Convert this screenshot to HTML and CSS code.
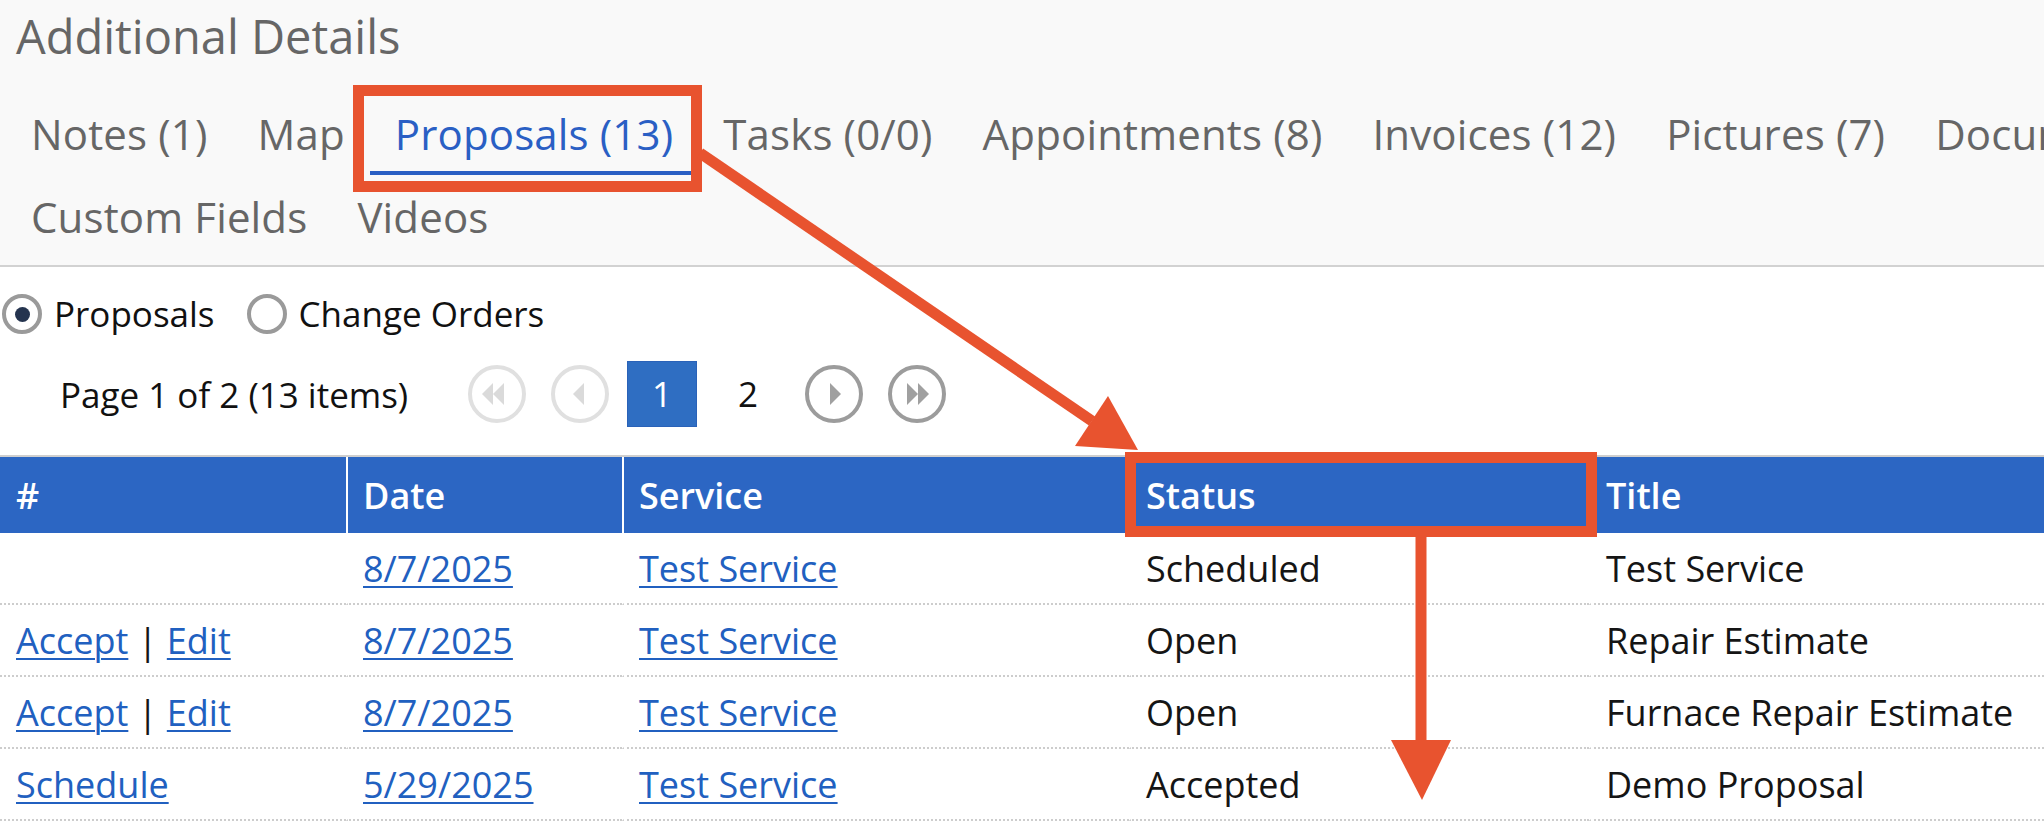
FILE: index.html
```html
<!DOCTYPE html>
<html lang="en">
<head>
    <meta charset="UTF-8">
    <title>Additional Details</title>
    <link rel="stylesheet" href="styles.css">
</head>
<body>
    <div class="page">
        <div class="details-head">
            <h2 class="details-title">Additional Details</h2>
            <ul class="tabs">
                <li class="tab">Notes (1)</li>
                <li class="tab">Map</li>
                <li class="tab tab-active">Proposals (13)</li>
                <li class="tab">Tasks (0/0)</li>
                <li class="tab">Appointments (8)</li>
                <li class="tab">Invoices (12)</li>
                <li class="tab">Pictures (7)</li>
                <li class="tab">Documents</li>
                <li class="tab">Custom Fields</li>
                <li class="tab">Videos</li>
            </ul>
        </div>

        <div class="doc-type">
            <label class="radio">
                <span class="radio-ring"><span class="radio-dot"></span></span>
                Proposals
            </label>
            <label class="radio">
                <span class="radio-ring"></span>
                Change Orders
            </label>
        </div>

        <div class="pager">
            <span class="pager-info">Page 1 of 2 (13 items)</span>
            <svg class="pager-btn pager-off" viewBox="0 0 58 58">
                <circle cx="29" cy="29" r="27" />
                <polygon points="14,29 25,18 25,40" />
                <polygon points="25,29 36,18 36,40" />
            </svg>
            <svg class="pager-btn pager-off pager-prev" viewBox="0 0 58 58">
                <circle cx="29" cy="29" r="27" />
                <polygon points="22,29 33,18 33,40" />
            </svg>
            <span class="page-num page-current">1</span>
            <span class="page-num">2</span>
            <svg class="pager-btn pager-next" viewBox="0 0 58 58">
                <circle cx="29" cy="29" r="27" />
                <polygon points="25,18 25,40 36,29" />
            </svg>
            <svg class="pager-btn pager-last" viewBox="0 0 58 58">
                <circle cx="29" cy="29" r="27" />
                <polygon points="19,18 19,40 30,29" />
                <polygon points="30,18 30,40 41,29" />
            </svg>
        </div>

        <table class="proposals-table">
            <colgroup>
                <col class="col-num">
                <col class="col-date">
                <col class="col-service">
                <col class="col-status">
                <col class="col-title">
            </colgroup>
            <thead>
                <tr>
                    <th>#</th>
                    <th>Date</th>
                    <th>Service</th>
                    <th>Status</th>
                    <th>Title</th>
                </tr>
            </thead>
            <tbody>
                <tr>
                    <td></td>
                    <td><a href="#">8/7/2025</a></td>
                    <td><a href="#">Test Service</a></td>
                    <td>Scheduled</td>
                    <td>Test Service</td>
                </tr>
                <tr>
                    <td><a href="#">Accept</a> | <a href="#">Edit</a></td>
                    <td><a href="#">8/7/2025</a></td>
                    <td><a href="#">Test Service</a></td>
                    <td>Open</td>
                    <td>Repair Estimate</td>
                </tr>
                <tr>
                    <td><a href="#">Accept</a> | <a href="#">Edit</a></td>
                    <td><a href="#">8/7/2025</a></td>
                    <td><a href="#">Test Service</a></td>
                    <td>Open</td>
                    <td>Furnace Repair Estimate</td>
                </tr>
                <tr>
                    <td><a href="#">Schedule</a></td>
                    <td><a href="#">5/29/2025</a></td>
                    <td><a href="#">Test Service</a></td>
                    <td>Accepted</td>
                    <td>Demo Proposal</td>
                </tr>
            </tbody>
        </table>

        <!-- annotation marks drawn over the screenshot -->
        <svg class="marks" viewBox="0 0 2044 822">
            <rect x="358.5" y="90.5" width="338" height="96" />
            <line x1="700" y1="153" x2="1092" y2="421" />
            <polygon points="1138,450 1108,396 1075,446" />
            <rect x="1130.5" y="457.5" width="461" height="74" />
            <line x1="1421" y1="536" x2="1421" y2="742" />
            <polygon points="1391,740 1451,740 1422,800" />
        </svg>
    </div>
</body>
</html>
```

FILE: styles.css
```css
body {
    margin: 0;
    font-family: "Open Sans", "Liberation Sans", sans-serif;
    background-color: #fff;
    color: #111;
    overflow: hidden;
}

.page {
    position: relative;
    width: 2044px;
    height: 822px;
    overflow: hidden;
}

/* header + tabs */
.details-head {
    background-color: #f9f9f9;
    border-bottom: 2px solid #d2d2d2;
    padding-bottom: 7px;
}

.details-title {
    margin: 0;
    padding-left: 16px;
    font-size: 47px;
    font-weight: normal;
    line-height: 72px;
    color: #666;
}

.tabs {
    display: flex;
    flex-wrap: wrap;
    row-gap: 14px;
    width: 2400px;
    margin: 0;
    padding: 34px 0 0 6px;
    list-style: none;
}

.tab {
    padding: 0 25px 9px;
    font-size: 42px;
    letter-spacing: 0.15px;
    line-height: 56px;
    color: #666;
    border-bottom: 4px solid transparent;
    white-space: nowrap;
}

.tab-active {
    color: #2a5fc4;
    border-bottom-color: #2a5fc4;
}

/* proposals / change orders */
.doc-type {
    display: flex;
    align-items: center;
    gap: 32px;
    padding: 27px 0 0 2px;
    font-size: 35px;
    line-height: 40px;
}

.radio {
    display: flex;
    align-items: center;
    gap: 12px;
}

.radio-ring {
    width: 32px;
    height: 32px;
    border: 4px solid #9a9a9a;
    border-radius: 50%;
    display: flex;
    justify-content: center;
    align-items: center;
}

.radio-dot {
    width: 15px;
    height: 15px;
    border-radius: 50%;
    background-color: #25344f;
}

/* pager */
.pager {
    display: flex;
    align-items: center;
    height: 66px;
    margin-top: 27px;
    padding-left: 60px;
    font-size: 35px;
}

.pager-info {
    width: 408px;
    white-space: nowrap;
}

.pager-btn {
    width: 58px;
    height: 58px;
}

.pager-btn circle {
    fill: none;
    stroke: #9c9c9c;
    stroke-width: 4;
}

.pager-btn polygon {
    fill: #a0a0a0;
}

.pager-off circle {
    stroke: #e0e0e0;
}

.pager-off polygon {
    fill: #dadada;
}

.pager-prev {
    margin-left: 25px;
}

.page-num {
    width: 70px;
    height: 66px;
    line-height: 66px;
    text-align: center;
    color: #111;
}

.page-current {
    margin-left: 18px;
    background-color: #2f6ec2;
    box-shadow: inset 0 0 0 1px #2a62b8;
    color: #fff;
}

.page-current + .page-num {
    margin-left: 16px;
}

.pager-next {
    margin-left: 22px;
}

.pager-last {
    margin-left: 25px;
}

/* table */
.proposals-table {
    width: 2300px;
    margin-top: 28px;
    border-top: 2px solid #cfcfcf;
    border-spacing: 0;
    table-layout: fixed;
    font-size: 36px;
}

.col-num { width: 346px; }
.col-date { width: 276px; }
.col-service { width: 507px; }
.col-status { width: 460px; }
.col-title { width: 711px; }

.proposals-table th {
    height: 76px;
    padding: 0 15px;
    background-color: #2c66c3;
    color: #fff;
    font-weight: 600;
    text-align: left;
    white-space: nowrap;
}

.proposals-table th + th {
    border-left: 2px solid #fff;
}

.proposals-table td {
    height: 70px;
    padding: 0 15px;
    border-bottom: 2px dotted #cdcdcd;
    white-space: nowrap;
    color: #151515;
}

.proposals-table td + td {
    border-left: 2px solid transparent;
}

.proposals-table th:first-child,
.proposals-table td:first-child {
    padding-left: 16px;
}

.proposals-table a {
    color: #2160c0;
    text-decoration: underline;
    text-decoration-thickness: 2px;
    text-underline-offset: 4px;
}

/* red callouts */
.marks {
    position: absolute;
    top: 0;
    left: 0;
    width: 2044px;
    height: 822px;
    pointer-events: none;
}

.marks rect {
    fill: none;
    stroke: #e8532f;
    stroke-width: 11;
}

.marks line {
    stroke: #e8532f;
    stroke-width: 11;
}

.marks polygon {
    fill: #e8532f;
}
```
